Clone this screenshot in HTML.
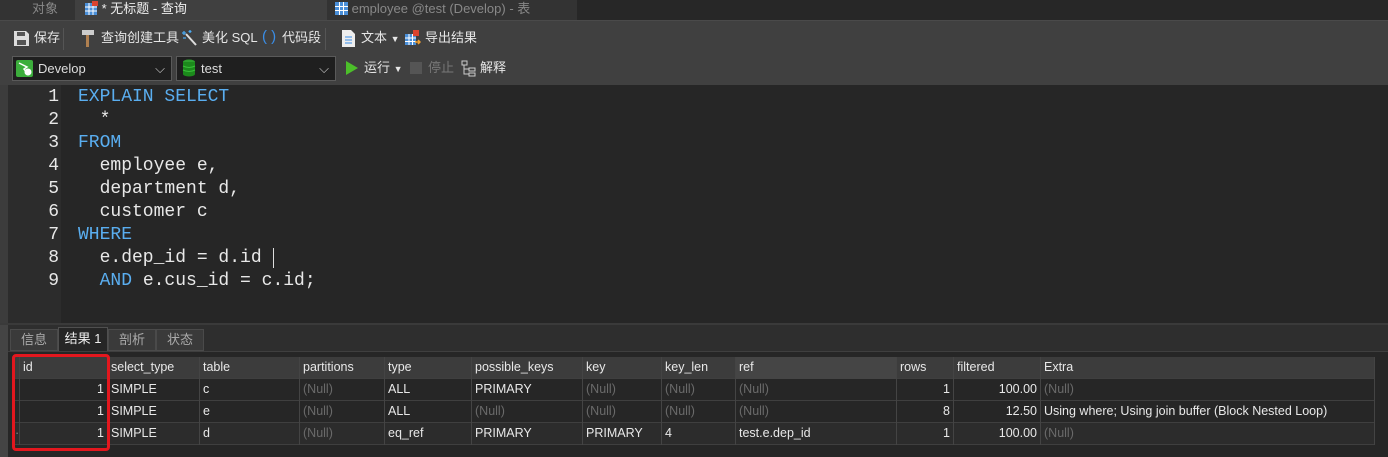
<!DOCTYPE html>
<html><head><meta charset="utf-8"><style>
*{margin:0;padding:0;box-sizing:border-box}
body{width:1388px;height:457px;background:#272727;position:relative;overflow:hidden;font-family:"Liberation Sans","Noto Sans CJK SC",sans-serif;font-size:13px;color:#ddd}
.a{position:absolute}
.tab{position:absolute;top:0;height:20px;line-height:18px;font-size:13px;color:#888;padding-left:6px}
.tb{font-size:13px;color:#e6e6e6;top:30px;position:absolute;line-height:16px}
.dd{position:absolute;top:56px;height:25px;background:#1f1f1f;border:1px solid #5a5a5a;color:#ddd;line-height:23px;font-size:13px}
.code{position:absolute;left:0;font-family:"Liberation Mono",monospace;font-size:18px;line-height:23px;white-space:pre}
.k{color:#5aaef0}
.grid{position:absolute;left:12px;top:357px;width:1363px}
.row{position:absolute;left:0;height:22px;width:1363px;border-bottom:1px solid #3f3f3f}
.c{position:absolute;top:0;height:22px;line-height:21px;font-size:12.5px;color:#e8e8e8;border-right:1px solid #444;padding:0 3px;white-space:nowrap;overflow:hidden}
.n{color:#6a6a6a}
.r{text-align:right}
</style></head><body>
<div class="a" style="left:0;top:0;width:8px;height:20px;background:#333"></div>
<div class="tab" style="left:8px;width:67px;background:#333;padding-left:24px">对象</div>
<div class="tab" style="left:75px;width:252px;background:#404040;color:#eee;padding-left:10px">
<svg width="13" height="14" style="vertical-align:-2px"><rect x="0" y="2" width="12" height="12" fill="#4a8fd8"/><path d="M0 6H12M0 10H12M4 2V14M8 2V14" stroke="#fff" stroke-width="1"/><rect x="7" y="0" width="6" height="5" fill="#d9442f"/></svg> * 无标题 - 查询</div>
<div class="tab" style="left:327px;width:250px;background:#333;padding-left:8px">
<svg width="13" height="13" style="vertical-align:-2px"><rect width="13" height="13" fill="#4a8fd8"/><path d="M0 4.5H13M0 8.5H13M4.5 0V13M8.5 0V13" stroke="#fff"/></svg> employee @test (Develop) - 表</div>
<div class="a" style="left:0;top:20px;width:1388px;height:65px;background:#404040;border-top:1px solid #4a4a4a"></div>
<svg class="a" style="left:13px;top:30px" width="17" height="17"><path d="M1 1H13L16 4V16H1Z" fill="#ddd"/><rect x="4" y="2" width="8" height="4" fill="#555"/><rect x="4" y="10" width="9" height="5" fill="#555"/></svg>
<div class="tb" style="left:34px">保存</div>
<div class="a" style="left:63px;top:28px;width:1px;height:22px;background:#555"></div>
<svg class="a" style="left:80px;top:30px" width="16" height="17"><rect x="2" y="0" width="12" height="5" fill="#ccc"/><rect x="6" y="5" width="3" height="12" fill="#b08050"/></svg>
<div class="tb" style="left:101px">查询创建工具</div>
<svg class="a" style="left:182px;top:30px" width="16" height="17"><path d="M4 4L14 15" stroke="#ddd" stroke-width="2"/><path d="M2 1V5M0 3H4M8 0V3M6.5 1.5H9.5M1 8H4" stroke="#4aa8f0" stroke-width="1.3"/></svg>
<div class="tb" style="left:202px">美化 SQL</div>
<div class="tb" style="left:262px;color:#3a8ee8;font-size:15px;top:29px">( )</div>
<div class="tb" style="left:282px">代码段</div>
<div class="a" style="left:325px;top:28px;width:1px;height:22px;background:#555"></div>
<svg class="a" style="left:342px;top:30px" width="13" height="17"><path d="M0 0H9L13 4V17H0Z" fill="#eee"/><path d="M3 7H10M3 10H10M3 13H10" stroke="#3a8ee8"/></svg>
<div class="tb" style="left:361px">文本 <span style="font-size:9px">▼</span></div>
<svg class="a" style="left:405px;top:30px" width="16" height="17"><rect x="0" y="4" width="11" height="11" fill="#4a8fd8"/><path d="M0 8H11M0 11.5H11M4 4V15M7.5 4V15" stroke="#fff"/><rect x="8" y="0" width="6" height="6" fill="#d9442f"/><path d="M10 12L15 12M13 10L15 12L13 14" stroke="#f0a030" stroke-width="1.5" fill="none"/></svg>
<div class="tb" style="left:425px">导出结果</div>
<div class="dd" style="left:12px;width:160px;padding-left:25px">Develop<span style="position:absolute;right:6px;top:0;color:#ccc">⌵</span></div>
<svg class="a" style="left:16px;top:60px" width="17" height="17"><rect width="17" height="17" rx="2" fill="#3cae3c"/><path d="M3 3L11 7L8 9L11 13" stroke="#fff" stroke-width="1.5" fill="none"/><circle cx="12" cy="12" r="3.5" fill="#fff"/></svg>
<div class="dd" style="left:176px;width:160px;padding-left:24px">test<span style="position:absolute;right:6px;top:0;color:#ccc">⌵</span></div>
<svg class="a" style="left:182px;top:59px" width="14" height="18"><ellipse cx="7" cy="3" rx="6" ry="2.5" fill="#2ea02e"/><rect x="1" y="3" width="12" height="12" fill="#1c8a1c"/><ellipse cx="7" cy="15" rx="6" ry="2.5" fill="#1c8a1c"/><path d="M1 7Q7 10 13 7M1 11Q7 14 13 11" stroke="#3ac03a" fill="none"/></svg>
<svg class="a" style="left:345px;top:61px" width="13" height="14"><path d="M1 0L13 7L1 14Z" fill="#4cbf2a"/></svg>
<div class="tb" style="left:364px;top:60px">运行 <span style="font-size:9px">▼</span></div>
<div class="a" style="left:410px;top:62px;width:12px;height:12px;background:#555"></div>
<div class="tb" style="left:428px;top:60px;color:#777">停止</div>
<svg class="a" style="left:461px;top:60px" width="16" height="17"><path d="M1 1H6V5H1ZM8 8H14V11H8ZM8 13H14V16H8ZM3 5V14H8M3 9H8" stroke="#ccc" fill="none"/></svg>
<div class="tb" style="left:480px;top:60px">解释</div>
<div class="a" style="left:0;top:85px;width:8px;height:240px;background:#3c3c3c"></div>
<div class="a" style="left:8px;top:85px;width:53px;height:238px;background:#2c2c2c"></div>
<div class="a" style="left:61px;top:85px;width:1327px;height:238px;background:#262626"></div>
<div class="code" style="top:86px;left:8px;width:51px;text-align:right;color:#e8e8e8">1
2
3
4
5
6
7
8
9</div>
<div class="code" style="top:86px;left:78px;color:#e8e8e8"><span class="k">EXPLAIN SELECT</span>
  *
<span class="k">FROM</span>
  employee e,
  department d,
  customer c
<span class="k">WHERE</span>
  e.dep_id = d.id 
  <span class="k">AND</span> e.cus_id = c.id;</div>
<div class="a" style="left:273px;top:248px;width:1px;height:20px;background:#ddd"></div>
<div class="a" style="left:0;top:323px;width:1388px;height:134px;background:#2e2e2e;border-top:2px solid #3a3a3a"></div>
<div class="a" style="left:0;top:325px;width:8px;height:132px;background:#444"></div>
<div class="a" style="left:10px;top:329px;width:48px;height:22px;background:#3a3a3a;border:1px solid #4a4a4a;color:#aaa;text-align:center;line-height:20px">信息</div>
<div class="a" style="left:58px;top:327px;width:50px;height:24px;background:#262626;border:1px solid #4f4f4f;border-bottom:none;color:#eee;text-align:center;line-height:22px">结果 1</div>
<div class="a" style="left:108px;top:329px;width:48px;height:22px;background:#3a3a3a;border:1px solid #4a4a4a;color:#aaa;text-align:center;line-height:20px">剖析</div>
<div class="a" style="left:156px;top:329px;width:48px;height:22px;background:#3a3a3a;border:1px solid #4a4a4a;color:#aaa;text-align:center;line-height:20px">状态</div>
<div class="a" style="left:8px;top:351px;width:1380px;height:106px;background:#262626;border-top:1px solid #3f3f3f"></div>
<div class="grid">
<div class="row" style="top:0;background:#3c3c3c">
<div class="c" style="left:0;width:8px"></div>
<div class="c" style="left:8px;width:88px">id</div>
<div class="c" style="left:96px;width:92px">select_type</div>
<div class="c" style="left:188px;width:100px">table</div>
<div class="c" style="left:288px;width:85px">partitions</div>
<div class="c" style="left:373px;width:87px">type</div>
<div class="c" style="left:460px;width:111px">possible_keys</div>
<div class="c" style="left:571px;width:79px">key</div>
<div class="c" style="left:650px;width:74px">key_len</div>
<div class="c" style="left:724px;width:161px;background:#454545">ref</div>
<div class="c" style="left:885px;width:57px">rows</div>
<div class="c" style="left:942px;width:87px">filtered</div>
<div class="c" style="left:1029px;width:334px">Extra</div>
</div>
<div class="row" style="top:22px">
<div class="c" style="left:0;width:8px"></div>
<div class="c r" style="left:8px;width:88px">1</div><div class="c" style="left:96px;width:92px">SIMPLE</div><div class="c" style="left:188px;width:100px">c</div><div class="c n" style="left:288px;width:85px">(Null)</div><div class="c" style="left:373px;width:87px">ALL</div><div class="c" style="left:460px;width:111px">PRIMARY</div><div class="c n" style="left:571px;width:79px">(Null)</div><div class="c n" style="left:650px;width:74px">(Null)</div><div class="c n" style="left:724px;width:161px">(Null)</div><div class="c r" style="left:885px;width:57px">1</div><div class="c r" style="left:942px;width:87px">100.00</div><div class="c n" style="left:1029px;width:334px">(Null)</div>
</div>
<div class="row" style="top:44px">
<div class="c" style="left:0;width:8px"></div>
<div class="c r" style="left:8px;width:88px">1</div><div class="c" style="left:96px;width:92px">SIMPLE</div><div class="c" style="left:188px;width:100px">e</div><div class="c n" style="left:288px;width:85px">(Null)</div><div class="c" style="left:373px;width:87px">ALL</div><div class="c n" style="left:460px;width:111px">(Null)</div><div class="c n" style="left:571px;width:79px">(Null)</div><div class="c n" style="left:650px;width:74px">(Null)</div><div class="c n" style="left:724px;width:161px">(Null)</div><div class="c r" style="left:885px;width:57px">8</div><div class="c r" style="left:942px;width:87px">12.50</div><div class="c" style="left:1029px;width:334px">Using where; Using join buffer (Block Nested Loop)</div>
</div>
<div class="row" style="top:66px;background:#2c2c2c">
<div class="c" style="left:0;width:8px;color:#888">·</div>
<div class="c r" style="left:8px;width:88px">1</div><div class="c" style="left:96px;width:92px">SIMPLE</div><div class="c" style="left:188px;width:100px">d</div><div class="c n" style="left:288px;width:85px">(Null)</div><div class="c" style="left:373px;width:87px">eq_ref</div><div class="c" style="left:460px;width:111px">PRIMARY</div><div class="c" style="left:571px;width:79px">PRIMARY</div><div class="c" style="left:650px;width:74px">4</div><div class="c" style="left:724px;width:161px">test.e.dep_id</div><div class="c r" style="left:885px;width:57px">1</div><div class="c r" style="left:942px;width:87px">100.00</div><div class="c n" style="left:1029px;width:334px">(Null)</div>
</div>
</div>
<div class="a" style="left:12px;top:354px;width:98px;height:97px;border:3px solid #e3171e;border-radius:4px"></div>
</body></html>
